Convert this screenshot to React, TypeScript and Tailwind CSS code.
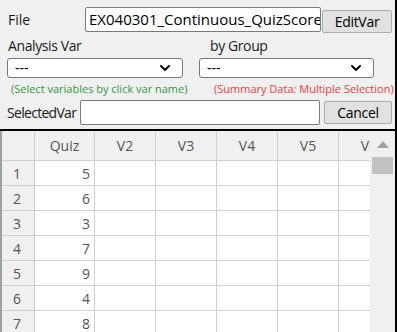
import { ChevronDown } from 'lucide-react';

const font = { fontFamily: '"Open Sans", "Noto Sans", sans-serif' };

const quiz = [5, 6, 3, 7, 9, 4, 8];
const cols = ['V2', 'V3', 'V4', 'V5', 'V6'];

function Select() {
  return (
    <div className="flex h-full items-center justify-between rounded-[3px] border border-[#7a7a7a] bg-white pl-[7px] pr-[9px]">
      <span className="text-[14px] leading-none text-black">---</span>
      <ChevronDown size={16} strokeWidth={3} className="text-black" />
    </div>
  );
}

export default function App() {
  return (
    <div style={font} className="h-[332px] w-[397px] overflow-hidden bg-[#f0f0f0] text-[#1a1a1a]">
      <div className="flex h-full w-[397px] flex-col border-r-2 border-black">
        {/* file row */}
        <div className="mt-[7px] flex h-[25px] items-center">
          <span className="ml-[8px] w-[77px] text-[14px]">File</span>
          <div className="flex h-[25px] w-[236px] items-center overflow-hidden whitespace-nowrap rounded-[2px] border border-[#7a7a7a] bg-white pl-[3px] text-[15px] text-black">
            EX040301_Continuous_QuizScore
          </div>
          <button className="ml-[1px] mt-[3px] h-[23px] w-[70px] rounded-[2px] border border-[#adadad] bg-[#e1e1e1] text-[14px] tracking-[-0.3px] text-black">
            EditVar
          </button>
        </div>

        {/* labels */}
        <div className="mt-[4px] flex h-[18px] items-center text-[14px] tracking-[-0.4px]">
          <span className="ml-[8px] w-[202px]">Analysis Var</span>
          <span>by Group</span>
        </div>

        {/* selects */}
        <div className="mt-[4px] flex h-[20px]">
          <div className="ml-[7px] w-[176px]">
            <Select />
          </div>
          <div className="ml-[16px] w-[175px]">
            <Select />
          </div>
        </div>

        {/* hints */}
        <div className="mt-[4px] flex h-[15px] items-center whitespace-nowrap text-[11px]">
          <span className="ml-[11px] w-[203px] text-[#2e9a3c]">(Select variables by click var name)</span>
          <span className="text-[#f03c3c]">(Summary Data: Multiple Selection)</span>
        </div>

        {/* selected var row */}
        <div className="mt-[3px] flex h-[25px] items-center">
          <span className="ml-[7px] w-[73px] whitespace-nowrap text-[14px] tracking-[-0.7px]">SelectedVar</span>
          <div className="h-[25px] w-[240px] rounded-[2px] border border-[#7a7a7a] bg-white" />
          <button className="ml-[4px] h-[23px] w-[68px] rounded-[2px] border border-[#adadad] bg-[#e1e1e1] text-[14px] tracking-[-0.3px] text-black">
            Cancel
          </button>
        </div>

        {/* grid */}
        <div className="mt-[4px] flex flex-1 overflow-hidden border-t-2 border-black">
          <div className="flex-1 overflow-hidden border-l-2 border-[#a0a0a0] bg-white text-[14px] text-[#555]">
            <div className="flex h-[30px] w-max border-b border-[#cfcfcf] bg-[#f0f0f0]">
              <div className="w-[33px] border-r border-[#cfcfcf]" />
              <div className="flex w-[60px] items-center justify-center border-r border-[#cfcfcf]">Quiz</div>
              {cols.map((c) => (
                <div key={c} className="flex w-[61px] items-center justify-center border-r border-[#cfcfcf]">
                  {c}
                </div>
              ))}
            </div>
            {quiz.map((q, i) => (
              <div key={i} className="flex h-[25px] w-max border-b border-[#cfcfcf]">
                <div className="flex w-[33px] items-center border-r border-[#cfcfcf] bg-[#f0f0f0] pl-[11px]">{i + 1}</div>
                <div className="flex w-[60px] items-center justify-end border-r border-[#cfcfcf] pr-[4px]">{q}</div>
                {cols.map((c) => (
                  <div key={c} className="w-[61px] border-r border-[#cfcfcf]" />
                ))}
              </div>
            ))}
          </div>
          {/* scrollbar */}
          <div className="flex w-[25px] flex-col items-center bg-[#f0f0f0]">
            <svg width="12" height="7" viewBox="0 0 12 7" className="mt-[10px]">
              <polygon points="6,0 12,7 0,7" fill="#a3a3a3" />
            </svg>
            <div className="mt-[9px] h-[17px] w-[21px] bg-[#c2c2c2]" />
          </div>
        </div>
      </div>
    </div>
  );
}
